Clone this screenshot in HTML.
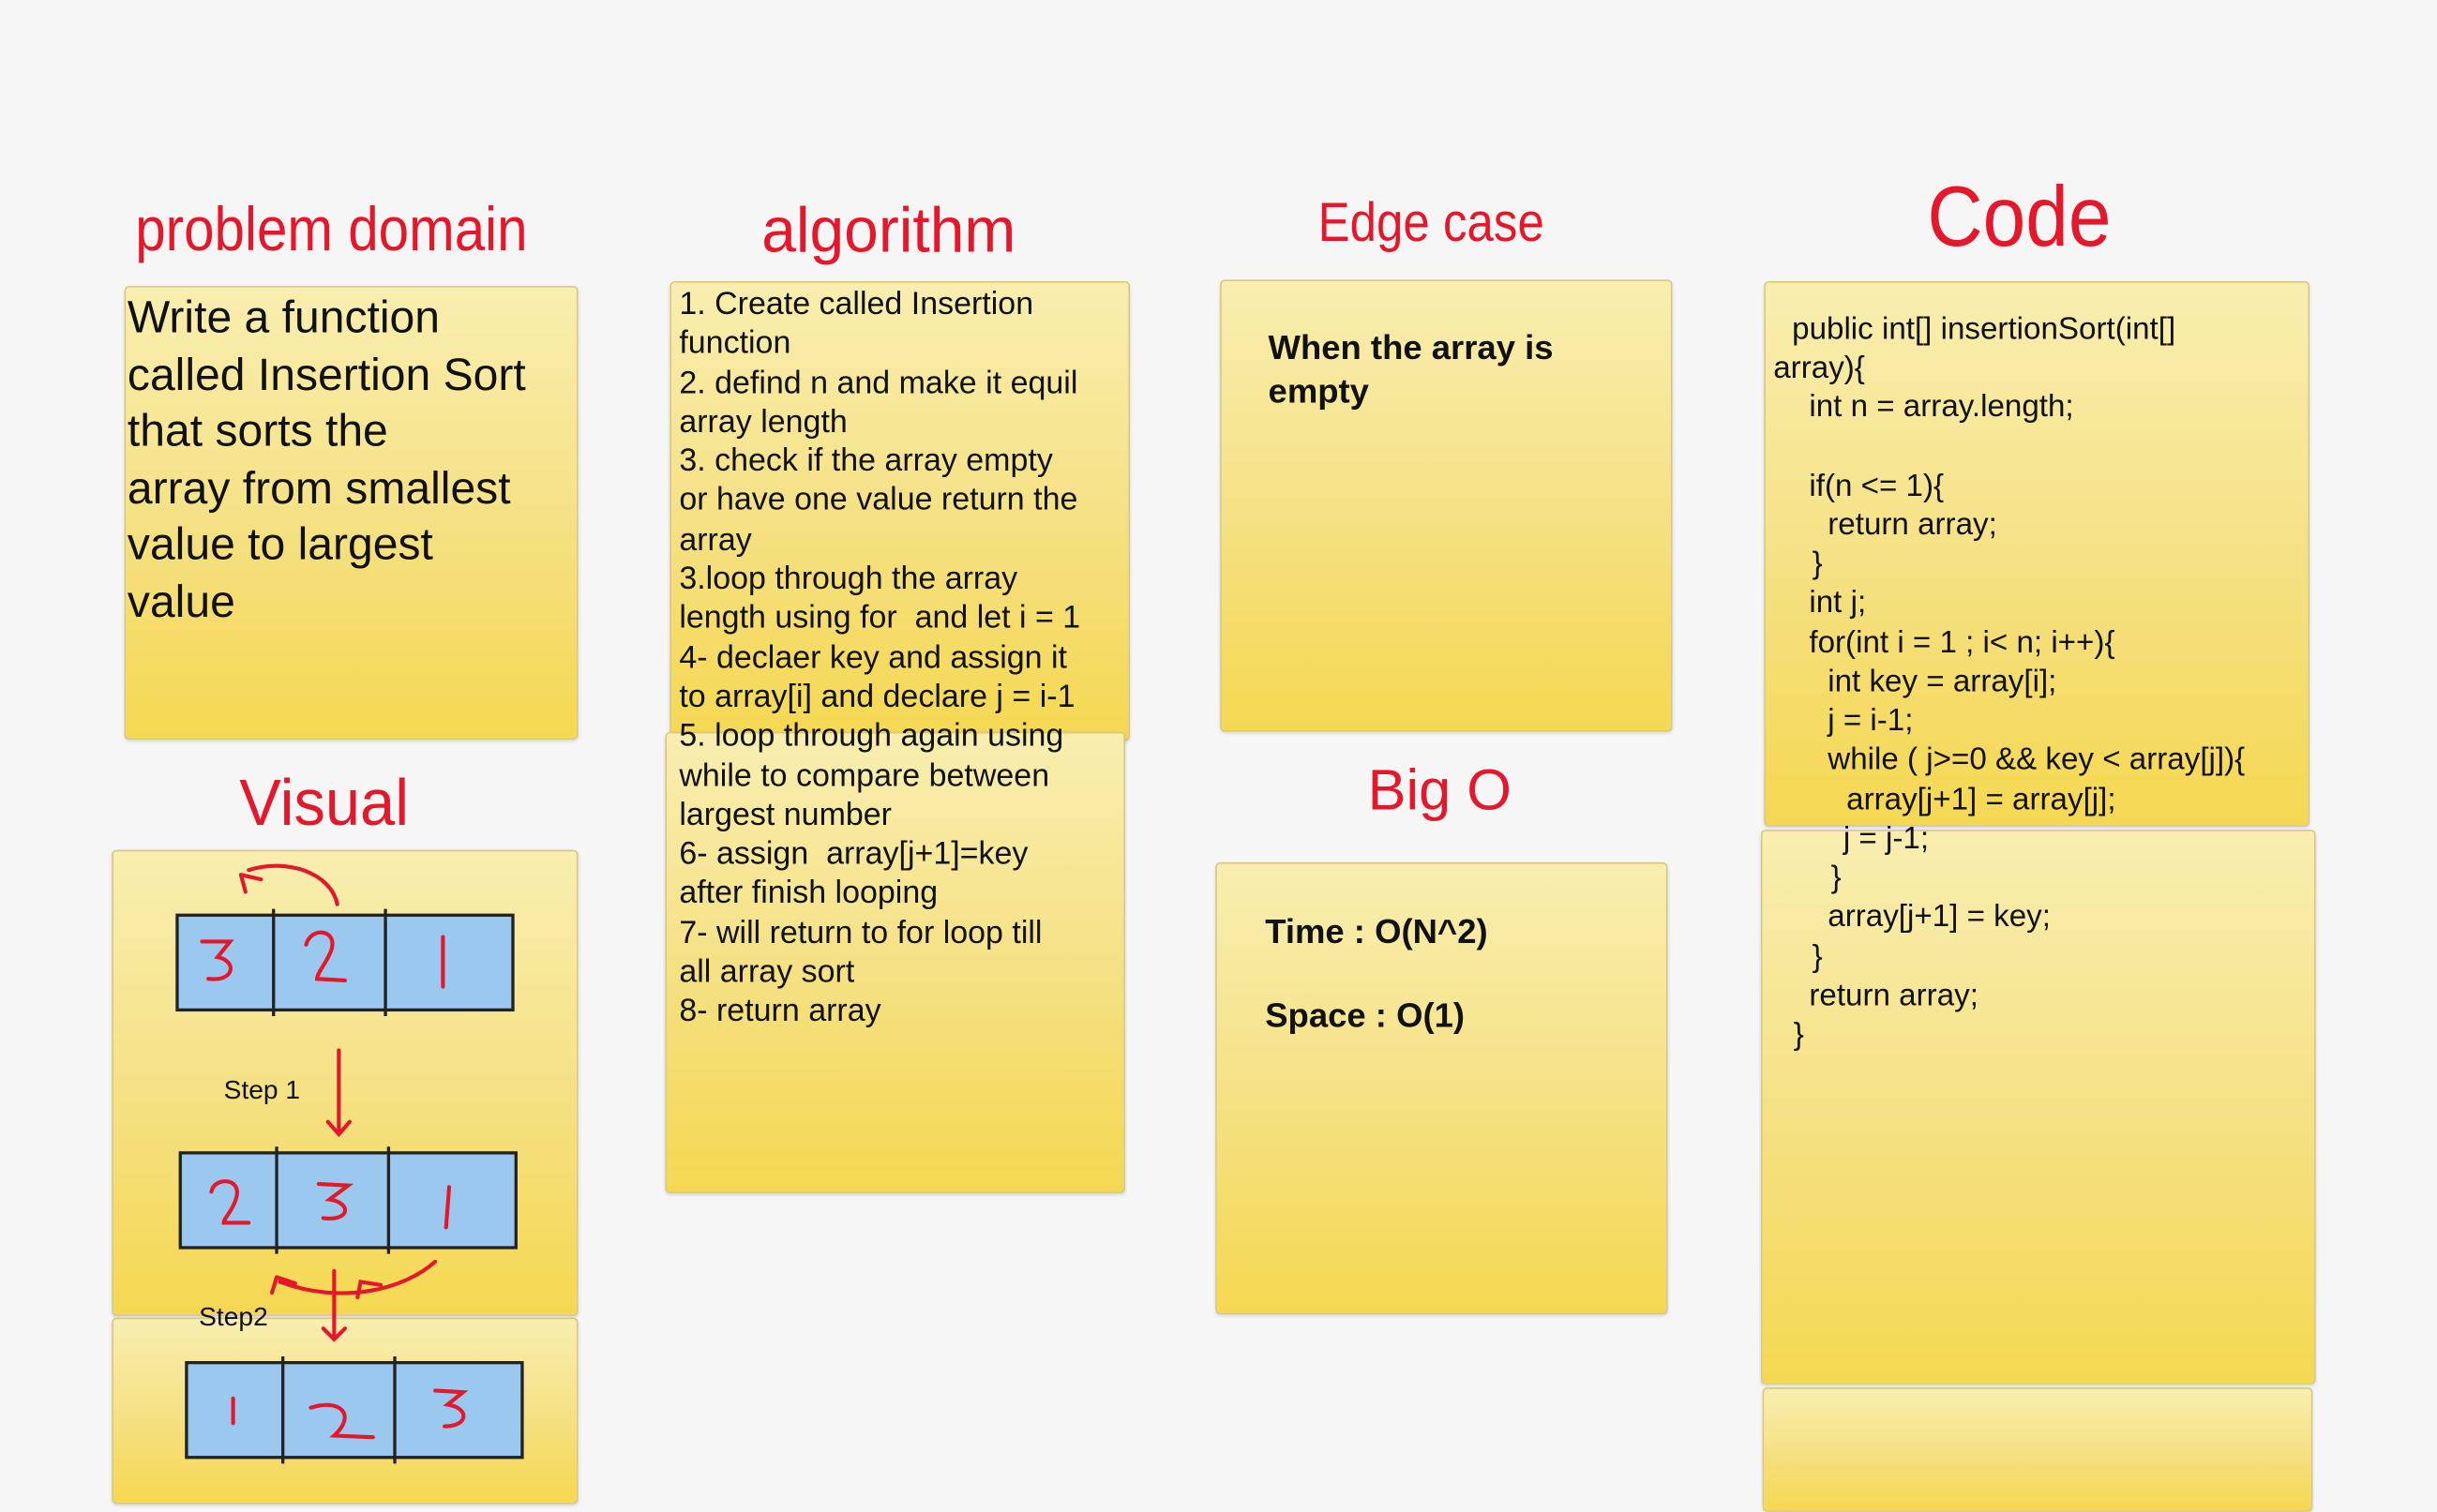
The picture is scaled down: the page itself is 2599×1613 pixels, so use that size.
<!DOCTYPE html>
<html><head><meta charset="utf-8"><style>
html,body{margin:0;padding:0;background:#f6f6f6;}
body{width:2599px;height:1586px;overflow:hidden;position:relative;}
#w{position:absolute;left:0;top:0;width:1568px;height:957px;transform:scale(1.65753);transform-origin:0 0;}
.n{position:absolute;background:linear-gradient(#f9eeb0,#f5e081 55%,#f5d851);border:1px solid #d8c882;border-radius:3px;box-shadow:0 1px 2px rgba(0,0,0,.12);box-sizing:border-box;}
.t{position:absolute;color:#e5172b;white-space:nowrap;line-height:1;transform-origin:0 0;}
.h{font-family:"Liberation Sans",sans-serif;}
.s{font-family:"Liberation Sans",sans-serif;}
.tx{position:absolute;white-space:pre;color:#111;}
.c{position:absolute;white-space:pre;color:#111;font-family:"Liberation Sans",sans-serif;font-size:20px;line-height:25.2px;}
</style></head><body><div id="w">
<div class="t h" style="left:87px;top:128px;font-size:40px;transform:scaleX(0.88)">problem domain</div>
<div class="t h" style="left:490px;top:128px;font-size:41px;transform:scaleX(0.97)">algorithm</div>
<div class="t h" style="left:848px;top:126px;font-size:35px;transform:scaleX(0.88)">Edge case</div>
<div class="t s" style="left:1240px;top:112px;font-size:55px;transform:scaleX(0.9)">Code</div>
<div class="t s" style="left:154px;top:496px;font-size:42px;transform:scaleX(0.96)">Visual</div>
<div class="t s" style="left:880px;top:490px;font-size:37px">Big O</div>

<div class="n" style="left:80px;top:184px;width:292px;height:292px"></div>
<div class="tx h" style="left:82px;top:187px;font-size:29px;line-height:36.6px">Write a function
called Insertion Sort
that sorts the
array from smallest
value to largest
value</div>

<div class="n" style="left:431px;top:181px;width:296px;height:296px"></div>
<div class="n" style="left:428px;top:471px;width:296px;height:297px"></div>
<div class="tx h" style="left:437px;top:183px;font-size:20.5px;line-height:25.3px">1. Create called Insertion
function
2. defind n and make it equil
array length
3. check if the array empty
or have one value return the
array
3.loop through the array
length using for  and let i = 1
4- declaer key and assign it
to array[i] and declare j = i-1
5. loop through again using
while to compare between
largest number
6- assign  array[j+1]=key
after finish looping
7- will return to for loop till
all array sort
8- return array</div>

<div class="n" style="left:785px;top:180px;width:291px;height:291px"></div>
<div class="tx s" style="left:816px;top:210px;font-size:22px;line-height:28px;font-weight:bold">When the array is
empty</div>

<div class="n" style="left:782px;top:555px;width:291px;height:291px"></div>
<div class="tx s" style="left:814px;top:587px;font-size:22px;font-weight:bold">Time : O(N^2)</div>
<div class="tx s" style="left:814px;top:641px;font-size:22px;font-weight:bold">Space : O(1)</div>

<div class="n" style="left:1135px;top:181px;width:351px;height:351px"></div>
<div class="n" style="left:1133px;top:534px;width:357px;height:357px"></div>
<div class="n" style="left:1134px;top:893px;width:354px;height:80px"></div>
<div class="c" style="left:1153px;top:200px">public int[] insertionSort(int[]</div>
<div class="c" style="left:1141px;top:225px">array){</div>
<div class="c" style="left:1164px;top:250px">int n = array.length;</div>
<div class="c" style="left:1164px;top:301px">if(n &lt;= 1){</div>
<div class="c" style="left:1176px;top:326px">return array;</div>
<div class="c" style="left:1166px;top:351px">}</div>
<div class="c" style="left:1164px;top:376px">int j;</div>
<div class="c" style="left:1164px;top:402px">for(int i = 1 ; i&lt; n; i++){</div>
<div class="c" style="left:1176px;top:427px">int key = array[i];</div>
<div class="c" style="left:1176px;top:452px">j = i-1;</div>
<div class="c" style="left:1176px;top:477px">while ( j&gt;=0 &amp;&amp; key &lt; array[j]){</div>
<div class="c" style="left:1188px;top:503px">array[j+1] = array[j];</div>
<div class="c" style="left:1186px;top:528px">j = j-1;</div>
<div class="c" style="left:1178px;top:553px">}</div>
<div class="c" style="left:1176px;top:578px">array[j+1] = key;</div>
<div class="c" style="left:1166px;top:604px">}</div>
<div class="c" style="left:1164px;top:629px">return array;</div>
<div class="c" style="left:1154px;top:654px">}</div>

<div class="n" style="left:72px;top:547px;width:300px;height:300px"></div>
<div class="n" style="left:72px;top:848px;width:300px;height:120px"></div>
<svg style="position:absolute;left:0;top:0" width="1568" height="957">
<g stroke="#222" stroke-width="2" fill="#9ac8ee">
<rect x="114" y="589" width="216" height="61"/>
<rect x="116" y="742" width="216" height="61"/>
<rect x="120" y="877" width="216" height="61"/>
</g>
<g stroke="#222" stroke-width="2">
<line x1="176" y1="585" x2="176" y2="654"/><line x1="248" y1="585" x2="248" y2="654"/>
<line x1="178" y1="738" x2="178" y2="807"/><line x1="250" y1="738" x2="250" y2="807"/>
<line x1="182" y1="873" x2="182" y2="942"/><line x1="254" y1="873" x2="254" y2="942"/>
</g>
<g stroke="#e5172b" stroke-width="2.5" fill="none" stroke-linecap="round">
<path d="M217 582 C213 562 185 552 160 560"/><path d="M155 563 L158 574 M155 563 L168 566"/>
<path d="M218 676 L218 730 M211 722 L218 730 L225 722"/>
<path d="M280 812 C260 830 220 840 180 825"/><path d="M178 822 L175 832 M178 822 L190 826"/>
<path d="M215 818 L215 862 M208 855 L215 862 L222 855"/>
<path d="M230 835 L232 825 L245 827"/>
<path d="M130 606 L148 606 L140 616 C152 618 152 632 134 630"/>
<path d="M197 608 C200 596 218 598 213 612 C210 620 204 626 204 630 L222 631"/>
<path d="M285 603 L285 635"/>
<path d="M136 767 C138 757 156 758 152 771 C150 779 144 784 144 787 L160 787"/>
<path d="M205 762 L224 763 L212 772 C226 774 226 786 208 784"/>
<path d="M289 764 L287 790"/>
<path d="M150 900 L150 916"/>
<path d="M200 906 C218 900 230 910 215 924 L240 925"/>
<path d="M280 895 L298 896 L288 904 C302 906 302 918 286 918"/>
</g>
<text x="144" y="707" font-family="Liberation Sans" font-size="17" fill="#111">Step 1</text>
<text x="128" y="853" font-family="Liberation Sans" font-size="17" fill="#111">Step2</text>
</svg>
</div></body></html>
